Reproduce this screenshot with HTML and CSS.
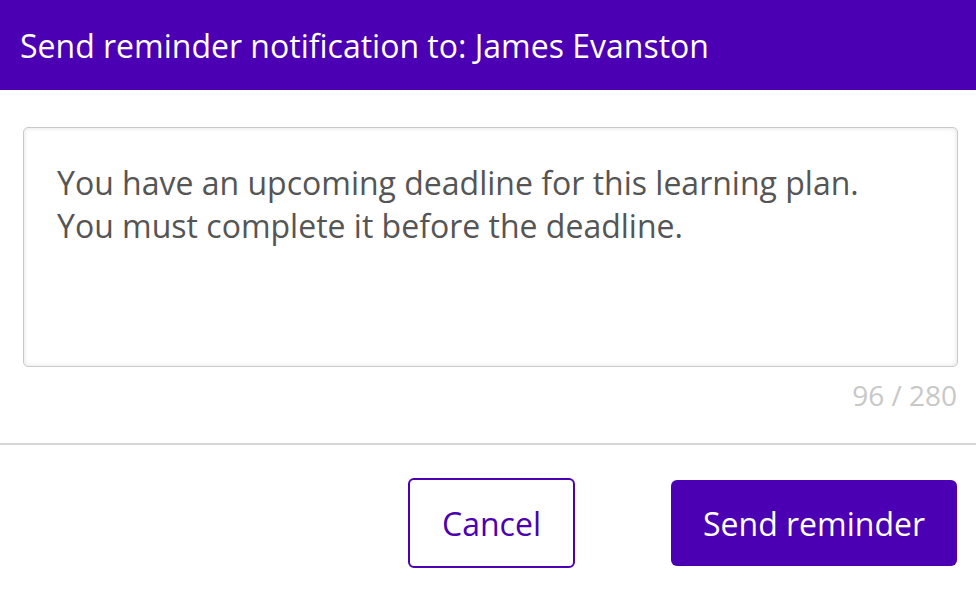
FILE: index.html
```html
<!DOCTYPE html>
<html lang="en">
<head>
    <meta charset="UTF-8">
    <title>Send reminder</title>
    <link rel="stylesheet" href="styles.css">
</head>
<body>
    <div class="modal">
        <div class="modal-header">
            <h1 class="modal-title">Send reminder notification to: James Evanston</h1>
        </div>

        <div class="modal-body">
            <div class="message-box">
                <p>You have an upcoming deadline for this learning plan.<br>You must complete it before the deadline.</p>
            </div>
            <div class="char-count">96 / 280</div>
        </div>

        <div class="modal-footer">
            <button class="btn btn-outline">Cancel</button>
            <button class="btn btn-primary">Send reminder</button>
        </div>
    </div>
</body>
</html>
```

FILE: styles.css
```css
body {
    margin: 0;
    font-family: "Open Sans", Arial, sans-serif;
    background-color: #fff;
}

.modal {
    width: 976px;
    height: 592px;
    overflow: hidden;
}

.modal-header {
    background-color: #4b00b3;
    height: 90px;
    display: flex;
    align-items: center;
    padding: 0 20px;
}

.modal-title {
    margin: 0;
    color: #fff;
    font-size: 32px;
    font-weight: 500;
}

.modal-body {
    padding: 37px 18px 0 23px;
}

.message-box {
    height: 240px;
    border: 1px solid #c9c9c9;
    border-radius: 5px;
    box-shadow: inset 0 0 5px rgba(0, 0, 0, 0.12);
    padding: 33px 33px;
    box-sizing: border-box;
}

.message-box p {
    margin: 0;
    color: #555;
    font-size: 32px;
    line-height: 43px;
}

.char-count {
    text-align: right;
    color: #c8c8c8;
    font-size: 28px;
    margin-top: 7px;
    padding-right: 1px;
    line-height: 42px;
}

.modal-footer {
    margin-top: 27px;
    border-top: 2px solid #d6d6d6;
    display: flex;
    justify-content: flex-end;
    align-items: center;
    gap: 96px;
    padding: 33px 19px 0 0;
}

.btn {
    font-family: "Open Sans", Arial, sans-serif;
    font-size: 32px;
    border-radius: 6px;
    cursor: pointer;
}

.btn-outline {
    width: 167px;
    height: 90px;
    background-color: #fff;
    border: 2px solid #4b00b3;
    color: #4b00b3;
}

.btn-primary {
    width: 286px;
    height: 86px;
    background-color: #4b00b3;
    border: none;
    color: #fff;
}
```
